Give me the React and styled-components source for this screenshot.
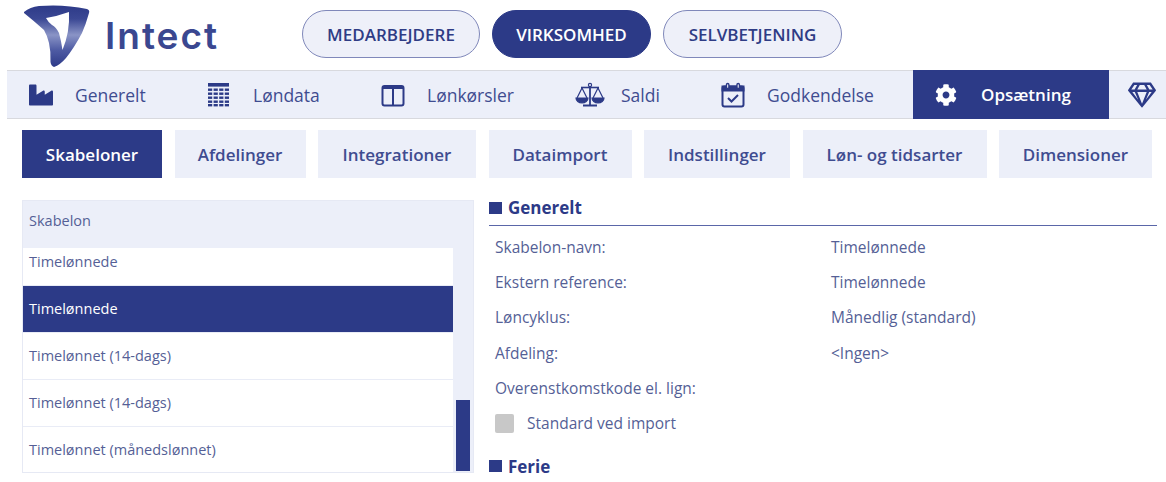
import React from "react";
import styled, { createGlobalStyle } from "styled-components";
import { FaIndustry, FaCog, FaRegGem } from "react-icons/fa";

const GlobalStyle = createGlobalStyle`
  html, body {
    margin: 0;
    padding: 0;
    background: #fff;
    font-family: "Open Sans", "Liberation Sans", sans-serif;
  }
  * { box-sizing: border-box; }
`;

const LogoMark = () => (
  <svg width="70" height="68" viewBox="0 0 70 68">
    <defs>
      <linearGradient id="mark" x1="0" y1="0" x2="0" y2="1">
        <stop offset="0" stopColor="#2d3a88" />
        <stop offset="0.22" stopColor="#3b4894" />
        <stop offset="0.48" stopColor="#8a94c6" />
        <stop offset="0.72" stopColor="#4f5ca4" />
        <stop offset="1" stopColor="#2d3a88" />
      </linearGradient>
    </defs>
    <path
      d="M0 10 Q6 5 15 4 Q40 2 63 7 Q66 8 65 11 Q62 22 58 31 Q50 46 42 56 Q36 63 30 65 Q27 64 26.5 60 Q27 50 25 41 Q23 33 20 28 Q10 19 0 11 Z"
      fill="url(#mark)"
    />
    <path
      d="M22 16 Q34 14 45 10 Q46 30 38.5 48 Q37 38 35 31 Q32 25 28 23 Q24 20 22 16 Z"
      fill="#ffffff"
    />
  </svg>
);

const TableIcon = () => (
  <svg width="24" height="26" viewBox="0 0 24 26" fill="#2c3a87">
    <rect x="1" y="1" width="21" height="3.6" />
    {[6.5, 10.5, 14.5, 18.5, 22].map((y) =>
      [1, 6.6, 12.2, 17.8].map((x) => (
        <rect key={`${x}-${y}`} x={x} y={y} width="4.2" height="2.4" />
      ))
    )}
  </svg>
);

const ColumnsIcon = () => (
  <svg width="24" height="24" viewBox="0 0 24 24" fill="none" stroke="#2c3a87" strokeWidth="2">
    <rect x="1.5" y="3" width="21" height="19.5" rx="2" />
    <line x1="1.5" y1="4.5" x2="22.5" y2="4.5" strokeWidth="3" />
    <line x1="12" y1="3" x2="12" y2="22" />
  </svg>
);

const ScaleIcon = () => (
  <svg width="30" height="26" viewBox="0 0 30 26" fill="none" stroke="#2c3a87" strokeWidth="1.2">
    <circle cx="15" cy="3" r="1.6" />
    <line x1="15" y1="4" x2="15" y2="23" strokeWidth="1.8" />
    <line x1="8" y1="23.5" x2="22" y2="23.5" strokeWidth="2" />
    <line x1="6" y1="5.5" x2="24" y2="5.5" strokeWidth="1.6" />
    <path d="M7 6 L2 16 M7 6 L12 16 M23 6 L18 16 M23 6 L28 16" />
    <path d="M1 16 H13 A6 5 0 0 1 1 16 Z" fill="#2c3a87" />
    <path d="M17 16 H29 A6 5 0 0 1 17 16 Z" fill="#2c3a87" />
  </svg>
);

const CalendarIcon = () => (
  <svg width="24" height="26" viewBox="0 0 24 26" fill="none" stroke="#2c3a87" strokeWidth="2">
    <rect x="1.5" y="4.5" width="21" height="20" rx="2" />
    <rect x="1.5" y="4.5" width="21" height="4" fill="#2c3a87" />
    <rect x="5.5" y="1.5" width="2.4" height="5" rx="1.2" fill="#fff" strokeWidth="1.4" />
    <rect x="16" y="1.5" width="2.4" height="5" rx="1.2" fill="#fff" strokeWidth="1.4" />
    <polyline points="7,16 10.5,19.5 17,13" />
  </svg>
);

const navItems = [
  { label: "Generelt", width: 178, icon: <FaIndustry size={24} /> },
  { label: "Løndata", width: 174, icon: <TableIcon /> },
  { label: "Lønkørsler", width: 194, icon: <ColumnsIcon /> },
  { label: "Saldi", width: 146, icon: <ScaleIcon /> },
  { label: "Godkendelse", width: 214, icon: <CalendarIcon /> },
  { label: "Opsætning", width: 196, icon: <FaCog size={22} />, active: true },
];

const tabs = [
  { label: "Skabeloner", width: 140, active: true },
  { label: "Afdelinger", width: 131 },
  { label: "Integrationer", width: 158 },
  { label: "Dataimport", width: 143 },
  { label: "Indstillinger", width: 146 },
  { label: "Løn- og tidsarter", width: 184 },
  { label: "Dimensioner", width: 153 },
];

const templates = [
  { name: "Timelønnede" },
  { name: "Timelønnede", selected: true },
  { name: "Timelønnet (14-dags)" },
  { name: "Timelønnet (14-dags)" },
  { name: "Timelønnet (månedslønnet)" },
];

const fields = [
  { label: "Skabelon-navn:", value: "Timelønnede" },
  { label: "Ekstern reference:", value: "Timelønnede" },
  { label: "Løncyklus:", value: "Månedlig (standard)" },
  { label: "Afdeling:", value: "<Ingen>" },
  { label: "Overenstkomstkode el. lign:", value: "" },
];

const App = () => {
  return (
    <>
      <GlobalStyle />
      <Page>
        <Header>
          <Logo>
            <LogoMark />
            <LogoText>Intect</LogoText>
          </Logo>
          <Pills>
            <Pill $width={178}>MEDARBEJDERE</Pill>
            <Pill $width={159} $active>
              VIRKSOMHED
            </Pill>
            <Pill $width={179}>SELVBETJENING</Pill>
          </Pills>
        </Header>
        <Nav>
          {navItems.map((item) => (
            <NavItem key={item.label} $width={item.width} $active={item.active}>
              <NavIcon $active={item.active}>{item.icon}</NavIcon>
              {item.label}
            </NavItem>
          ))}
          <Diamond>
            <FaRegGem size={28} />
          </Diamond>
        </Nav>
        <Tabs>
          {tabs.map((tab) => (
            <Tab key={tab.label} $width={tab.width} $active={tab.active}>
              {tab.label}
            </Tab>
          ))}
        </Tabs>
        <Content>
          <ListPanel>
            <ListHeader>Skabelon</ListHeader>
            <ListBody>
              <Rows>
                {templates.map((row, i) => (
                  <Row key={i} $selected={row.selected}>
                    {row.name}
                  </Row>
                ))}
              </Rows>
              <Track>
                <Thumb />
              </Track>
            </ListBody>
          </ListPanel>
          <Details>
            <SectionTitle $ruled>Generelt</SectionTitle>
            <Fields>
              {fields.map((field) => (
                <Field key={field.label}>
                  <span>{field.label}</span>
                  <span>{field.value}</span>
                </Field>
              ))}
            </Fields>
            <CheckRow>
              <CheckBox />
              Standard ved import
            </CheckRow>
            <SectionTitle>Ferie</SectionTitle>
          </Details>
        </Content>
      </Page>
    </>
  );
};

export default App;

const Page = styled.div`
  width: 1166px;
  height: 482px;
  overflow: hidden;
  background: #fff;
`;

const Header = styled.header`
  display: flex;
  align-items: flex-start;
  height: 70px;
  padding-left: 24px;
`;

const Logo = styled.div`
  display: flex;
  align-items: flex-start;
  width: 278px;
  padding-top: 2px;
`;

const LogoText = styled.div`
  margin: 11px 0 0 11px;
  font-family: Inter, "Open Sans", sans-serif;
  font-size: 37px;
  line-height: 46px;
  font-weight: 600;
  letter-spacing: 2px;
  color: #3a4790;
`;

const Pills = styled.div`
  display: flex;
  gap: 12px;
  padding-top: 10px;
`;

const Pill = styled.div`
  width: ${(props) => props.$width}px;
  height: 48px;
  display: flex;
  align-items: center;
  justify-content: center;
  border-radius: 24px;
  border: 1px solid ${(props) => (props.$active ? "#2c3a87" : "#8088ba")};
  background: ${(props) => (props.$active ? "#2c3a87" : "#eef0f9")};
  color: ${(props) => (props.$active ? "#fff" : "#2f3c85")};
  font-size: 17px;
  font-weight: 600;
`;

const Nav = styled.nav`
  display: flex;
  align-items: stretch;
  height: 49px;
  margin-left: 7px;
  background: #eceff9;
  border-top: 1px solid #d8d9de;
  border-bottom: 1px solid #d8d9de;
`;

const NavItem = styled.div`
  width: ${(props) => props.$width}px;
  display: flex;
  align-items: center;
  margin: ${(props) => (props.$active ? "-1px 0" : "0")};
  padding-left: 22px;
  font-size: ${(props) => (props.$active ? "17px" : "17.5px")};
  font-weight: ${(props) => (props.$active ? 600 : 500)};
  background: ${(props) => (props.$active ? "#2c3a87" : "transparent")};
  color: ${(props) => (props.$active ? "#fff" : "#3f4c90")};
`;

const NavIcon = styled.span`
  width: 46px;
  display: flex;
  align-items: center;
  color: ${(props) => (props.$active ? "#fff" : "#2c3a87")};
`;

const Diamond = styled.div`
  display: flex;
  align-items: center;
  padding-left: 19px;
  color: #2c3a87;
`;

const Tabs = styled.div`
  display: flex;
  gap: 12.5px;
  padding: 11px 0 0 22px;
`;

const Tab = styled.div`
  width: ${(props) => props.$width}px;
  height: 48px;
  display: flex;
  align-items: center;
  justify-content: center;
  font-size: 17px;
  font-weight: 600;
  background: ${(props) => (props.$active ? "#2c3a87" : "#eceff9")};
  color: ${(props) => (props.$active ? "#fff" : "#3f4c90")};
`;

const Content = styled.main`
  display: flex;
  align-items: flex-start;
  padding: 22px 9px 0 22px;
  gap: 15px;
`;

const ListPanel = styled.section`
  width: 452px;
  height: 273px;
  display: flex;
  flex-direction: column;
  background: #eceff9;
  border: 1px solid #e6e9f4;
  overflow: hidden;
`;

const ListHeader = styled.div`
  height: 47px;
  flex-shrink: 0;
  padding: 10px 6px 0;
  font-size: 14.5px;
  line-height: 19px;
  color: #555f96;
`;

const ListBody = styled.div`
  flex: 1;
  min-height: 0;
  display: flex;
  overflow: hidden;
`;

const Rows = styled.div`
  width: 430px;
  flex-shrink: 0;
  margin-top: -9px;
`;

const Row = styled.div`
  height: 47px;
  display: flex;
  align-items: center;
  padding: 0 0 2px 6px;
  font-size: 14.5px;
  background: ${(props) => (props.$selected ? "#2c3a87" : "#fff")};
  color: ${(props) => (props.$selected ? "#fff" : "#555f96")};
  border-bottom: 1px solid #e9ecf6;
`;

const Track = styled.div`
  flex: 1;
  display: flex;
  align-items: flex-end;
  padding: 0 0 1px 3px;
`;

const Thumb = styled.div`
  width: 14px;
  height: 71px;
  background: #2c3a87;
`;

const Details = styled.section`
  flex: 1;
`;

const SectionTitle = styled.h2`
  display: flex;
  align-items: center;
  gap: 6px;
  margin: 0;
  height: ${(props) => (props.$ruled ? "26px" : "24px")};
  font-size: 17px;
  font-weight: 700;
  color: #2c3a87;
  border-bottom: ${(props) => (props.$ruled ? "1px solid #5a66a8" : "none")};
  padding-bottom: ${(props) => (props.$ruled ? "10px" : "0")};
  &::before {
    content: "";
    width: 13px;
    height: 12px;
    background: #2c3a87;
  }
`;

const Fields = styled.div`
  display: flex;
  flex-direction: column;
  padding: 3px 0 0 6px;
`;

const Field = styled.div`
  display: grid;
  grid-template-columns: 336px 1fr;
  align-items: center;
  height: 35.3px;
  font-size: 15.5px;
  color: #555f96;
`;

const CheckRow = styled.div`
  display: flex;
  align-items: center;
  height: 36px;
  margin-bottom: 13px;
  padding-left: 6px;
  gap: 13px;
  font-size: 15.5px;
  color: #555f96;
`;

const CheckBox = styled.span`
  width: 19px;
  height: 19px;
  border-radius: 2px;
  background: #c8c8c8;
`;
